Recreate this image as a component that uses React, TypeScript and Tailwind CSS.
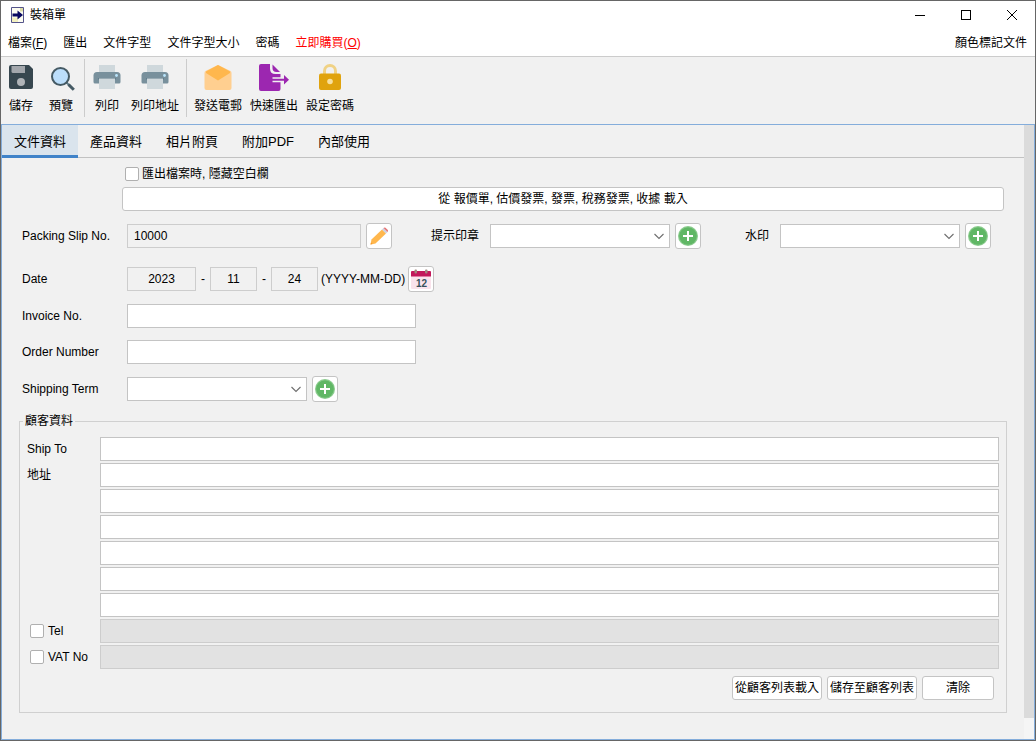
import type { InputHTMLAttributes, ReactNode } from "react";

function AppIcon() {
  return (
    <svg width="13" height="16" viewBox="0 0 13 16" aria-hidden="true">
      <path d="M0.5 0.5H12.5V15.5H0.5Z" fill="#fdfdf2" stroke="#54548a" />
      <path d="M9 1V4.500H12V1Z" fill="#dcdca8" />
      <path d="M1 10.500H7V15H1Z" fill="#f3f0c0" />
      <path d="M1.500 6.500H6.500V3.500L12 8L6.500 12.500V9.500H1.500Z" fill="#080860" />
    </svg>
  );
}

function SaveIcon() {
  return (
    <svg width="24" height="24" viewBox="0 0 24 24" aria-hidden="true">
      <path d="M2 0H20L24 4V22Q24 24 22 24H2Q0 24 0 22V2Q0 0 2 0Z" fill="#37474f" />
      <path d="M2.500 1H16V8H4Q2.500 8 2.500 6.500Z" fill="#a3a7ac" />
      <circle cx="12" cy="17" r="4" fill="#b0b4b8" />
    </svg>
  );
}

function PreviewIcon() {
  return (
    <svg className="shrink-0" width="28" height="28" viewBox="0 0 28 28" aria-hidden="true">
      <path d="M19.500 19.500L26 26" stroke="#607d8b" strokeWidth="2" />
      <path d="M21.500 21.500L26.800 26.800" stroke="#455a64" strokeWidth="3" />
      <circle cx="13.500" cy="13.500" r="8.500" fill="#bbdefb" stroke="#455a64" strokeWidth="2" />
    </svg>
  );
}

function PrinterIcon() {
  return (
    <svg className="shrink-0" width="28" height="24" viewBox="0 0 28 24" aria-hidden="true">
      <rect x="6" width="16" height="9" fill="#cfd8dc" />
      <path d="M4 7H24Q27.500 7 27.500 10.500V17Q27.500 18.500 26 18.500H2Q0.500 18.500 0.500 17V10.500Q0.500 7 4 7Z" fill="#78909c" />
      <rect x="5" y="13" width="18" height="1.500" fill="#607d8b" />
      <rect x="6" y="13.500" width="16" height="10.500" fill="#cfd8dc" />
      <circle cx="23.500" cy="10.500" r="1.400" fill="#b9e4fb" />
    </svg>
  );
}

function MailIcon() {
  return (
    <svg className="shrink-0" width="28" height="25" viewBox="0 0 28 25" aria-hidden="true">
      <path d="M14 0L26.500 6Q27.500 6.600 27.500 8V23Q27.500 25 25.500 25H2.500Q0.500 25 0.500 23V8Q0.500 6.600 1.500 6Z" fill="#ffcf90" />
      <path d="M14 0L26 6.500V8L14 15.500L2 8V6.500Z" fill="#ffb74d" />
    </svg>
  );
}

function ExportIcon() {
  return (
    <svg className="shrink-0" width="30" height="27" viewBox="0 0 30 27" aria-hidden="true">
      <path d="M2 0H11V4.500Q11 10 16.500 10H21.500V13.300H13.500V14.800H25V11L30 15.800L25 20.600V16.800H13.500V18.300H21.500V25Q21.500 27 19.500 27H2Q0 27 0 25V2Q0 0 2 0Z" fill="#9c27b0" />
      <path d="M13.500 0.500L21 8H17.500Q13.500 8 13.500 4Z" fill="#9c27b0" />
    </svg>
  );
}

function LockIcon() {
  return (
    <svg width="22" height="26" viewBox="0 0 22 26" aria-hidden="true">
      <path d="M5.500 11V7A5.500 5.500 0 0 1 16.500 7V11" fill="none" stroke="#f0d285" strokeWidth="3" />
      <rect y="9.500" width="22" height="16.500" rx="2" fill="#e0a30e" />
      <circle cx="11" cy="17.500" r="2.800" fill="#f7e0a0" />
    </svg>
  );
}

function PencilIcon() {
  return (
    <svg width="20" height="20" viewBox="0 0 20 20" aria-hidden="true">
      <path d="M2.500 13.500L13 3.500L17 7.500L6.500 17.500L1.500 18.500Z" fill="#ffb74d" />
      <path d="M2 16.500L3.500 18L1.500 18.500Z" fill="#f5962a" />
      <path d="M13 3.500L14.500 2L18.500 6L17 7.500Z" fill="#cdd0e0" />
      <path d="M14.500 2Q15.500 1 16.500 1.700L18.800 4Q19.500 5 18.500 6Z" fill="#e57373" />
    </svg>
  );
}

function CalendarIcon() {
  return (
    <svg width="20" height="20" viewBox="0 0 20 20" aria-hidden="true">
      <rect y="7" width="20" height="13" rx="1" fill="#fae3ec" />
      <path d="M1 2H19Q20 2 20 3V7.500H0V3Q0 2 1 2Z" fill="#c2185b" />
      <rect x="3.500" y="0.500" width="2.500" height="4" rx="1" fill="#a1887f" />
      <rect x="14" y="0.500" width="2.500" height="4" rx="1" fill="#a1887f" />
      <text x="10.500" y="18" textAnchor="middle" fontSize="10" fontWeight="700" fill="#37515c">12</text>
    </svg>
  );
}

function PlusIcon() {
  return (
    <svg width="20" height="20" viewBox="0 0 20 20" aria-hidden="true">
      <circle cx="10" cy="10" r="10" fill="#8acb8d" />
      <circle cx="10" cy="10" r="8.800" fill="#60b765" />
      <path d="M10 5V15M5 10H15" stroke="#fff" strokeWidth="2" />
    </svg>
  );
}

function IconButton({ label, children }: { label: string; children: ReactNode }) {
  return (
    <button
      type="button"
      aria-label={label}
      className="flex size-[26px] shrink-0 items-center justify-center rounded-[3px] border border-[#c4c4c4] bg-white"
    >
      {children}
    </button>
  );
}

function TextButton({ className, children }: { className: string; children: ReactNode }) {
  return (
    <button
      type="button"
      className={`h-6 rounded-[3px] border border-[#c4c4c4] bg-white whitespace-nowrap ${className}`}
    >
      {children}
    </button>
  );
}

function Field({ className, ...rest }: InputHTMLAttributes<HTMLInputElement>) {
  return (
    <input
      type="text"
      className={`h-6 min-w-0 border border-[#c4c4c4] bg-white px-1.5 outline-none read-only:border-[#cdcdcd] read-only:bg-[#f1f1f1] disabled:border-[#cdcdcd] disabled:bg-[#e2e2e2] ${className ?? ""}`}
      {...rest}
    />
  );
}

function Dropdown({ id }: { id: string }) {
  return (
    <div className="relative w-[180px] shrink-0">
      <select id={id} className="block h-6 w-full appearance-none border border-[#c4c4c4] bg-white px-2 outline-none">
        <option></option>
      </select>
      <svg className="pointer-events-none absolute top-2 right-1.5" width="10" height="8" viewBox="0 0 10 8" aria-hidden="true">
        <path d="M0.500 2L5 6.500L9.500 2" fill="none" stroke="#6e6e6e" strokeWidth="1.100" />
      </svg>
    </div>
  );
}

function Tick({ id }: { id: string }) {
  return (
    <input id={id} type="checkbox" className="size-3.5 shrink-0 appearance-none rounded-[2px] border border-[#b0b0b0] bg-white" />
  );
}

function Tool({ label, children }: { label: string; children: ReactNode }) {
  return (
    <button type="button" className="flex flex-col items-center gap-[7px] px-1 whitespace-nowrap">
      <span className="flex h-7 w-6 items-center justify-center">{children}</span>
      <span>{label}</span>
    </button>
  );
}

const tabs = ["文件資料", "產品資料", "相片附頁", "附加PDF", "內部使用"];
const addressLines = [1, 2, 3, 4, 5, 6];

export default function App() {
  return (
    <div className="flex min-h-screen flex-col border border-[#666666] bg-[#f1f1f1] font-['Liberation_Sans','Noto_Sans_CJK_TC',sans-serif] text-xs leading-4 text-black">
      <header className="bg-white">
        <div className="flex h-7 items-center pl-2.5">
          <AppIcon />
          <h1 className="ml-1.5 flex-1">裝箱單</h1>
          <button type="button" aria-label="最小化" className="flex h-7 w-[46px] items-center justify-center">
            <svg width="10" height="10" viewBox="0 0 10 10"><path d="M0 5.500H10" stroke="#000" /></svg>
          </button>
          <button type="button" aria-label="最大化" className="flex h-7 w-[46px] items-center justify-center">
            <svg width="10" height="10" viewBox="0 0 10 10"><rect x="0.500" y="0.500" width="9" height="9" fill="none" stroke="#000" /></svg>
          </button>
          <button type="button" aria-label="關閉" className="flex h-7 w-[46px] items-center justify-center">
            <svg width="10" height="10" viewBox="0 0 10 10"><path d="M0 0L10 10M10 0L0 10" stroke="#000" /></svg>
          </button>
        </div>
        <nav className="flex h-7 items-center gap-4 border-b border-[#cccccc] pr-2 pl-[7px]">
          <button type="button">檔案(<u>F</u>)</button>
          <button type="button">匯出</button>
          <button type="button">文件字型</button>
          <button type="button">文件字型大小</button>
          <button type="button">密碼</button>
          <button type="button" className="text-[#ff0000]">立即購買(<u>O</u>)</button>
          <button type="button" className="ml-auto">顏色標記文件</button>
        </nav>
      </header>

      <div className="flex h-[67px] items-start pt-0.5 pl-1">
        <div className="flex gap-2 pt-1">
          <Tool label="儲存"><SaveIcon /></Tool>
          <Tool label="預覽"><PreviewIcon /></Tool>
        </div>
        <div className="mr-1.5 ml-[7px] h-[58px] w-px bg-[#cccccc]" />
        <div className="flex gap-1 pt-1">
          <Tool label="列印"><PrinterIcon /></Tool>
          <Tool label="列印地址"><PrinterIcon /></Tool>
        </div>
        <div className="mx-[3px] h-[58px] w-px bg-[#cccccc]" />
        <div className="flex pt-1">
          <Tool label="發送電郵"><MailIcon /></Tool>
          <Tool label="快速匯出"><ExportIcon /></Tool>
          <Tool label="設定密碼"><LockIcon /></Tool>
        </div>
      </div>

      <div className="flex flex-1 border border-[#84addb]">
        <main className="min-w-0 flex-1">
          <div role="tablist" className="flex h-[33px] border-b border-[#c2c2c2] text-[13px]">
            {tabs.map((tab, i) => (
              <button
                key={tab}
                type="button"
                role="tab"
                aria-selected={i === 0}
                className="h-[33px] px-3 aria-selected:border-b-[3px] aria-selected:border-[#4083c9] aria-selected:bg-[#dae4ed] aria-selected:pt-[3px]"
              >
                {tab}
              </button>
            ))}
          </div>

          <form className="pt-2 pr-[17px] pb-6 pl-[17px]">
            <div className="ml-[106px] flex h-4 items-center gap-[3px]">
              <Tick id="hide-blank" />
              <label htmlFor="hide-blank">匯出檔案時, 隱藏空白欄</label>
            </div>
            <div className="mt-[5px] mr-[3px] ml-[103px] flex">
              <TextButton className="flex-1">從 報價單, 估價發票, 發票, 稅務發票, 收據 載入</TextButton>
            </div>

            <div className="pl-[3px]">
              <div className="mt-3 flex h-[26px] items-center">
                <label htmlFor="slip" className="w-[105px] shrink-0">Packing Slip No.</label>
                <Field id="slip" className="w-[234px]" defaultValue="10000" readOnly />
                <div className="ml-[5px]"><IconButton label="編輯"><PencilIcon /></IconButton></div>
                <label htmlFor="stamp" className="ml-[39px] w-[59px] shrink-0">提示印章</label>
                <Dropdown id="stamp" />
                <div className="ml-[5px]"><IconButton label="新增印章"><PlusIcon /></IconButton></div>
                <label htmlFor="watermark" className="ml-11 w-[35px] shrink-0">水印</label>
                <Dropdown id="watermark" />
                <div className="ml-[5px]"><IconButton label="新增水印"><PlusIcon /></IconButton></div>
              </div>

              <div className="mt-[17px] flex h-[26px] items-center">
                <label htmlFor="year" className="w-[105px] shrink-0">Date</label>
                <Field id="year" className="w-[69px] text-center" defaultValue="2023" readOnly />
                <span className="w-3.5 text-center">-</span>
                <Field aria-label="Month" className="w-[47px] text-center" defaultValue="11" readOnly />
                <span className="w-3.5 text-center">-</span>
                <Field aria-label="Day" className="w-[47px] text-center" defaultValue="24" readOnly />
                <span className="ml-[3px] w-[87px] whitespace-nowrap">(YYYY-MM-DD)</span>
                <IconButton label="選擇日期"><CalendarIcon /></IconButton>
              </div>

              <div className="mt-3 flex items-center">
                <label htmlFor="invoice" className="w-[105px] shrink-0">Invoice No.</label>
                <Field id="invoice" className="w-[289px]" />
              </div>
              <div className="mt-3 flex items-center">
                <label htmlFor="order" className="w-[105px] shrink-0">Order Number</label>
                <Field id="order" className="w-[289px]" />
              </div>
              <div className="mt-3 flex h-[26px] items-center">
                <label htmlFor="term" className="w-[105px] shrink-0">Shipping Term</label>
                <Dropdown id="term" />
                <div className="ml-[5px]"><IconButton label="新增條款"><PlusIcon /></IconButton></div>
              </div>
            </div>

            <fieldset className="mt-[11px] border border-[#d0d0d0] px-[7px] pt-2 pb-3">
              <legend className="-ml-1 px-[2px]">顧客資料</legend>
              <div className="flex flex-col gap-0.5">
                <div className="flex items-center">
                  <label htmlFor="ship-to" className="w-[73px] shrink-0">Ship To</label>
                  <Field id="ship-to" className="flex-1" />
                </div>
                {addressLines.map((line) => (
                  <div key={line} className="flex items-center">
                    {line === 1 ? (
                      <label htmlFor="address-1" className="w-[73px] shrink-0">地址</label>
                    ) : (
                      <span className="w-[73px] shrink-0" />
                    )}
                    <Field
                      id={line === 1 ? "address-1" : undefined}
                      aria-label={line === 1 ? undefined : `地址 ${line}`}
                      className="flex-1"
                    />
                  </div>
                ))}
                <div className="flex items-center">
                  <div className="flex w-[73px] shrink-0 items-center gap-1 pl-[3px]">
                    <Tick id="tel" />
                    <label htmlFor="tel">Tel</label>
                  </div>
                  <Field aria-label="Tel" className="flex-1" disabled />
                </div>
                <div className="flex items-center">
                  <div className="flex w-[73px] shrink-0 items-center gap-1 pl-[3px]">
                    <Tick id="vat" />
                    <label htmlFor="vat">VAT No</label>
                  </div>
                  <Field aria-label="VAT No" className="flex-1" disabled />
                </div>
              </div>
              <div className="mt-[7px] flex justify-end gap-[5px] pr-[5px]">
                <TextButton className="w-[90px]">從顧客列表載入</TextButton>
                <TextButton className="w-[90px]">儲存至顧客列表</TextButton>
                <TextButton className="w-[72px]">清除</TextButton>
              </div>
            </fieldset>
          </form>
        </main>
        <div className="flex w-2.5 shrink-0 flex-col bg-[#f5f5f5] pb-[21px]">
          <div className="flex-1 bg-[#dbdbdb]" />
        </div>
      </div>
    </div>
  );
}
